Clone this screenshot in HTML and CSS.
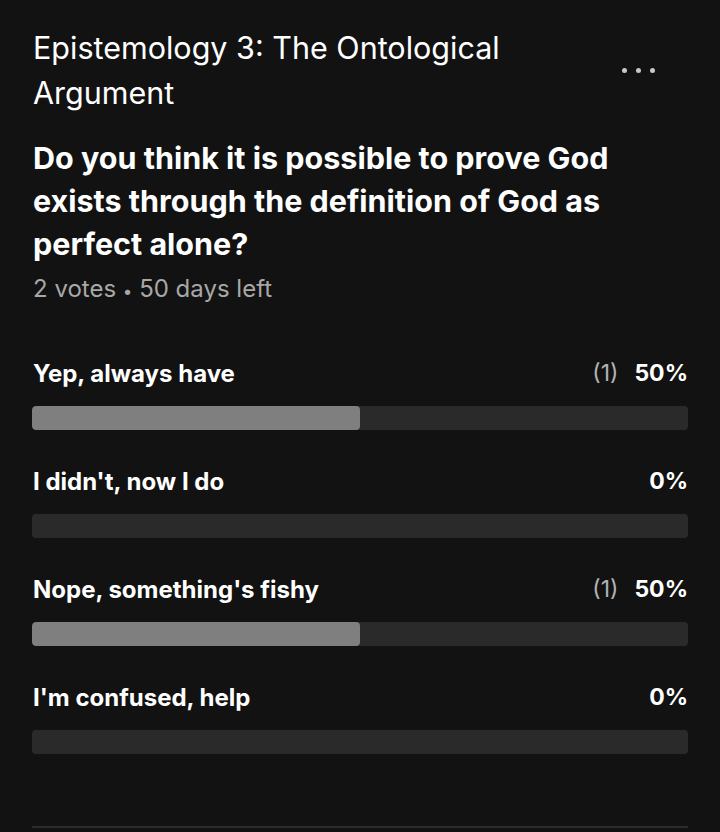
FILE: index.html
```html
<!DOCTYPE html>
<html lang="en">
<head>
<meta charset="utf-8">
<title>Poll</title>
<link rel="stylesheet" href="styles.css">
</head>
<body>
<div class="poll">
  <div class="header">
    <h1 class="title">Epistemology 3: The Ontological Argument</h1>
    <button class="more" aria-label="More options"><span></span><span></span><span></span></button>
  </div>
  <h2 class="question">Do you think it is possible to prove God exists through the definition of God as perfect alone?</h2>
  <p class="meta">2 votes <span class="dot">•</span> 50 days left</p>

  <div class="options">
    <div class="option">
      <div class="row">
        <span class="label">Yep, always have</span>
        <span class="result"><span class="count">(1)</span><span class="pct">50%</span></span>
      </div>
      <div class="track"><div class="fill" style="width:50%"></div></div>
    </div>
    <div class="option">
      <div class="row">
        <span class="label">I didn't, now I do</span>
        <span class="result"><span class="pct">0%</span></span>
      </div>
      <div class="track"><div class="fill" style="width:0%"></div></div>
    </div>
    <div class="option">
      <div class="row">
        <span class="label">Nope, something's fishy</span>
        <span class="result"><span class="count">(1)</span><span class="pct">50%</span></span>
      </div>
      <div class="track"><div class="fill" style="width:50%"></div></div>
    </div>
    <div class="option">
      <div class="row">
        <span class="label">I'm confused, help</span>
        <span class="result"><span class="pct">0%</span></span>
      </div>
      <div class="track"><div class="fill" style="width:0%"></div></div>
    </div>
  </div>
  <div class="divider"></div>
</div>
</body>
</html>
```
FILE: styles.css
```css
html, body {
  margin: 0;
  padding: 0;
  background: #121212;
}
body {
  font-family: "Inter", "Liberation Sans", sans-serif;
  color: #ffffff;
  width: 720px;
  height: 832px;
  overflow: hidden;
}
.poll {
  padding: 25px 32px 0 32px;
}
.header {
  display: flex;
  align-items: center;
  justify-content: space-between;
}
.title {
  margin: 0 0 0 1px;
  font-weight: 400;
  font-size: 30.5px;
  line-height: 45px;
  max-width: 520px;
}
.more {
  background: none;
  border: 0;
  padding: 0;
  margin-right: 33px;
  display: flex;
  gap: 9px;
  cursor: pointer;
}
.more span {
  width: 5px;
  height: 5px;
  border-radius: 50%;
  background: #c8c8c8;
}
.question {
  margin: 21px 0 0 1px;
  font-weight: 700;
  font-size: 30.5px;
  line-height: 43px;
  max-width: 655px;
}
.meta {
  margin: 9px 0 0 1px;
  font-size: 24px;
  line-height: 30px;
  color: #a8a8a8;
}
.meta .dot {
  font-size: 17px;
}
.options {
  margin-top: 52px;
  display: flex;
  flex-direction: column;
  gap: 36px;
}
.row {
  display: flex;
  justify-content: space-between;
  align-items: center;
  height: 30px;
  padding-left: 1px;
}
.label {
  font-weight: 700;
  font-size: 24px;
}
.result {
  display: flex;
  gap: 16px;
  font-size: 23px;
}
.count {
  color: #b3b3b3;
}
.pct {
  font-weight: 700;
}
.track {
  margin-top: 18px;
  height: 24px;
  border-radius: 4px;
  background: #2a2a2a;
  overflow: hidden;
}
.fill {
  height: 100%;
  background: #7f7f7f;
  border-radius: 4px;
}
.divider {
  margin-top: 72px;
  height: 2px;
  background: #2c2c2c;
}
```
